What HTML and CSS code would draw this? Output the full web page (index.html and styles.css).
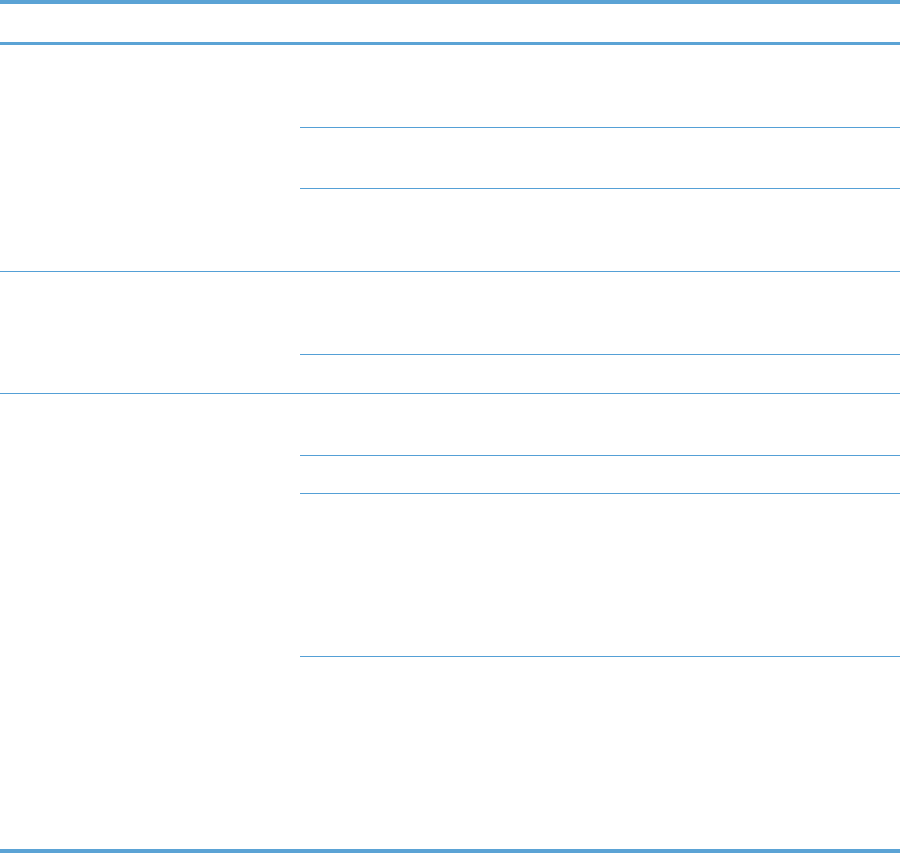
FILE: index.html
```html
<!DOCTYPE html>
<html lang="en">
<head>
<meta charset="utf-8">
<title>Table</title>
<link rel="stylesheet" href="styles.css">
</head>
<body>
<div class="spec-table">
  <div class="head-row"></div>
  <div class="group">
    <div class="group-label"></div>
    <div class="group-rows">
      <div class="row row-tall"></div>
      <div class="row row-mid"></div>
      <div class="row row-tall"></div>
    </div>
  </div>
  <div class="group">
    <div class="group-label"></div>
    <div class="group-rows">
      <div class="row row-tall"></div>
      <div class="row row-short"></div>
    </div>
  </div>
  <div class="group">
    <div class="group-label"></div>
    <div class="group-rows">
      <div class="row row-mid2"></div>
      <div class="row row-short2"></div>
      <div class="row row-large"></div>
      <div class="row row-xlarge"></div>
    </div>
  </div>
</div>
</body>
</html>
```
FILE: styles.css
```css
html, body {
  margin: 0;
  padding: 0;
  background: #ffffff;
  font-family: "Liberation Sans", Arial, sans-serif;
}

.spec-table {
  width: 900px;
  border-top: 4px solid #5ba3d5;
  border-bottom: 4px solid #5ba3d5;
}

.head-row {
  height: 38px;
  border-bottom: 3px solid #5ba3d5;
}

.group {
  display: flex;
  border-bottom: 1px solid #55a0d6;
}

.group:last-child {
  border-bottom: none;
}

.group-label {
  width: 300px;
  flex: none;
}

.group-rows {
  flex: 1;
}

.row {
  border-bottom: 1px solid #55a0d6;
}

.row:last-child {
  border-bottom: none;
}

.row-tall { height: 82px; }
.row-mid { height: 60px; }
.row-short { height: 38px; }
.row-mid2 { height: 61px; }
.row-short2 { height: 37px; }
.row-large { height: 162px; }
.row-xlarge { height: 192px; }
```
